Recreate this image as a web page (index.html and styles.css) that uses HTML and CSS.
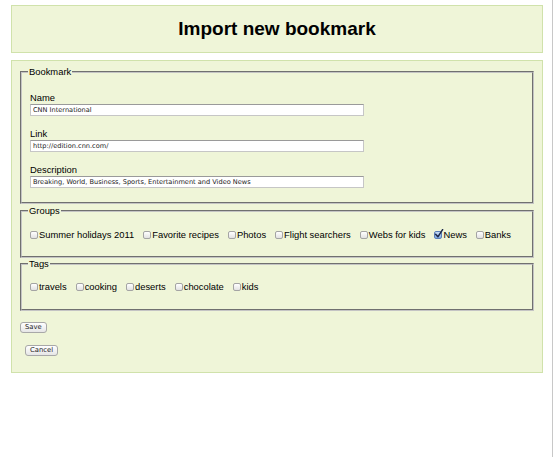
FILE: index.html
```html
<!DOCTYPE html>
<html lang="en">
<head>
<meta charset="utf-8">
<title>Import new bookmark</title>
<link rel="stylesheet" href="styles.css">
</head>
<body>
<div class="page">
  <header class="box head">
    <h1 class="title">Import new bookmark</h1>
  </header>
  <main class="box form">
    <fieldset class="fs fs-bookmark">
      <legend class="lg">Bookmark</legend>
      <div class="field">
        <label class="lbl">Name</label>
        <input class="txt" type="text" value="CNN International">
      </div>
      <div class="field">
        <label class="lbl">Link</label>
        <input class="txt" type="text" value="http://edition.cnn.com/">
      </div>
      <div class="field">
        <label class="lbl">Description</label>
        <input class="txt" type="text" value="Breaking, World, Business, Sports, Entertainment and Video News">
      </div>
    </fieldset>
    <fieldset class="fs fs-checks fs-groups">
      <legend class="lg">Groups</legend>
      <div class="checks">
        <label class="chk"><span class="cb"></span>Summer holidays 2011</label>
        <label class="chk"><span class="cb"></span>Favorite recipes</label>
        <label class="chk"><span class="cb"></span>Photos</label>
        <label class="chk"><span class="cb"></span>Flight searchers</label>
        <label class="chk"><span class="cb"></span>Webs for kids</label>
        <label class="chk"><span class="cb on"><svg class="tick" viewBox="0 0 10 10" width="10" height="10"><path d="M1.6 5.2 L3.9 7.8 L8.6 0.6" fill="none" stroke="#1d2a4a" stroke-width="1.5" stroke-linecap="round" stroke-linejoin="round"/></svg></span>News</label>
        <label class="chk"><span class="cb"></span>Banks</label>
      </div>
    </fieldset>
    <fieldset class="fs fs-checks fs-tags">
      <legend class="lg">Tags</legend>
      <div class="checks">
        <label class="chk"><span class="cb"></span>travels</label>
        <label class="chk"><span class="cb"></span>cooking</label>
        <label class="chk"><span class="cb"></span>deserts</label>
        <label class="chk"><span class="cb"></span>chocolate</label>
        <label class="chk"><span class="cb"></span>kids</label>
      </div>
    </fieldset>
    <div class="actions">
      <button class="btn" type="button">Save</button>
    </div>
    <div class="actions actions-cancel">
      <button class="btn" type="button">Cancel</button>
    </div>
  </main>
</div>
</body>
</html>
```

FILE: styles.css
```css
* {
  box-sizing: border-box;
}

html,
body {
  margin: 0;
  padding: 0;
  background: #ffffff;
}

body {
  font-family: "Liberation Sans", Arial, sans-serif;
  color: #000;
}

.page {
  width: 553px;
  min-height: 457px;
  padding: 5px 9px 0 11px;
  border-right: 1px solid #c8c8c8;
}

.box {
  background: #eff5d8;
  border: 1px solid #d0e2ab;
}

.head {
  height: 48px;
  display: flex;
  align-items: center;
  justify-content: center;
}

.title {
  margin: 0;
  font-size: 19px;
  font-weight: bold;
  line-height: 22px;
}

.form {
  margin-top: 7px;
  padding: 5px 8px 16px 8px;
}

.fs {
  margin: 0;
  padding: 0 8px 0 8px;
  border: 2px groove #c4c4c4;
  min-width: 0;
}

.lg {
  font-size: 9.4px;
  line-height: 11px;
  padding: 0 1px;
  margin-left: -2px;
}

.fs-bookmark {
  padding-top: 15px;
  padding-bottom: 14px;
}

.field {
  display: flex;
  flex-direction: column;
  align-items: flex-start;
  margin-bottom: 12px;
}

.field:last-child {
  margin-bottom: 0;
}

.lbl {
  font-size: 9.4px;
  line-height: 11px;
  margin-bottom: 1px;
}

.txt {
  width: 334px;
  height: 12px;
  margin: 0;
  padding: 0 2px;
  border: 1px solid #c6c6c6;
  border-top-color: #9a9a9a;
  background: #fff;
  font-family: "DejaVu Sans", sans-serif;
  font-size: 6.6px;
  color: #222;
  outline: none;
}

.fs-groups {
  margin-top: 1px;
  padding-top: 13px;
  padding-bottom: 16px;
}

.fs-tags {
  margin-top: 0;
  padding-top: 12px;
  padding-bottom: 17px;
}

.checks {
  display: flex;
  flex-wrap: wrap;
  gap: 9px;
  height: 11px;
  align-items: center;
}

.chk {
  display: inline-flex;
  align-items: center;
  font-size: 9.4px;
  line-height: 11px;
  white-space: nowrap;
}

.cb {
  position: relative;
  display: inline-block;
  width: 8px;
  height: 8px;
  margin-right: 1px;
  border: 1px solid #a4a4a4;
  border-radius: 2px;
  background: linear-gradient(#ffffff, #e2e2e2);
}

.cb.on {
  border-color: #5a7fb8;
  background: linear-gradient(#c7ddf7, #7fa9e2);
}

.tick {
  position: absolute;
  left: -1px;
  top: -3px;
}

.actions {
  margin-top: 11px;
  display: flex;
}

.actions-cancel {
  margin-top: 12px;
  padding-left: 5px;
}

.btn {
  margin: 0;
  height: 11px;
  padding: 0 4px;
  border: 1px solid #a8a8a8;
  border-radius: 3px;
  background: linear-gradient(#ffffff, #e6e6e6);
  font-family: "DejaVu Sans", sans-serif;
  font-size: 6.8px;
  line-height: 9px;
  color: #222;
}
```
